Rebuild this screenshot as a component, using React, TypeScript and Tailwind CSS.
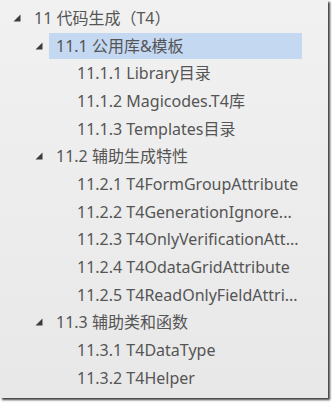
import React from "react";

type Node = {
  label: string;
  level: number;
  expanded?: boolean;
  selected?: boolean;
};

const nodes: Node[] = [
  { label: "11 代码生成（T4）", level: 0, expanded: true },
  { label: "11.1 公用库&模板", level: 1, expanded: true, selected: true },
  { label: "11.1.1 Library目录", level: 2 },
  { label: "11.1.2 Magicodes.T4库", level: 2 },
  { label: "11.1.3 Templates目录", level: 2 },
  { label: "11.2 辅助生成特性", level: 1, expanded: true },
  { label: "11.2.1 T4FormGroupAttribute", level: 2 },
  { label: "11.2.2 T4GenerationIgnore...", level: 2 },
  { label: "11.2.3 T4OnlyVerificationAtt...", level: 2 },
  { label: "11.2.4 T4OdataGridAttribute", level: 2 },
  { label: "11.2.5 T4ReadOnlyFieldAttri...", level: 2 },
  { label: "11.3 辅助类和函数", level: 1, expanded: true },
  { label: "11.3.1 T4DataType", level: 2 },
  { label: "11.3.2 T4Helper", level: 2 },
];

const indent = ["pl-[13px]", "pl-[35px]", "pl-[77px]"];

function Expander() {
  return (
    <svg width="8" height="8" viewBox="0 0 8 8" className="mr-[13px] shrink-0">
      <polygon points="7.5,0.5 7.5,7.5 0.5,7.5" fill="#3c3c3c" />
    </svg>
  );
}

export default function App() {
  return (
    <div className="h-[403px] w-[332px] bg-white">
      <div className="h-[398px] w-[328px] bg-gradient-to-b from-[#f1f1f1] to-[#e8e8e8] pt-[4px] shadow-[2px_2px_2px_rgba(0,0,0,0.75)]">
        <ul
          className="w-[302px] text-[16px] text-[#555555]"
          style={{ fontFamily: '"Noto Sans", "Noto Sans CJK SC", sans-serif' }}
        >
          {nodes.map((n, i) => (
            <li key={i} className={`flex h-[27.7px] items-center ${indent[n.level]}`}>
              {n.expanded && <Expander />}
              <span
                className={`flex h-[26px] min-w-0 flex-1 items-center ${
                  n.selected ? "-ml-[7px] bg-[#c4d8f2] pl-[7px]" : ""
                }`}
              >
                <span className="whitespace-nowrap">{n.label}</span>
              </span>
            </li>
          ))}
        </ul>
      </div>
    </div>
  );
}
